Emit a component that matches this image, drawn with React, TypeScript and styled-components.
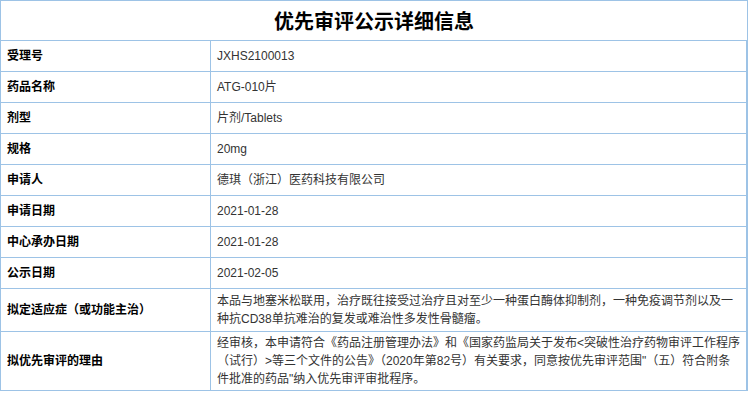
import React from 'react';
import styled, {createGlobalStyle} from 'styled-components';

const GlobalStyle = createGlobalStyle`
  html, body {
    margin: 0;
    padding: 0;
    background: #fff;
  }
  body {
    font-family: "Liberation Sans", "Noto Sans CJK SC", sans-serif;
  }
`;

const border = '#9dc3e6';

type Item = {label: string; value: string; h?: number};

const items: Item[] = [
    {label: '受理号', value: 'JXHS2100013'},
    {label: '药品名称', value: 'ATG-010片'},
    {label: '剂型', value: '片剂/Tablets'},
    {label: '规格', value: '20mg'},
    {label: '申请人', value: '德琪（浙江）医药科技有限公司'},
    {label: '申请日期', value: '2021-01-28'},
    {label: '中心承办日期', value: '2021-01-28'},
    {label: '公示日期', value: '2021-02-05'},
    {
        label: '拟定适应症（或功能主治）',
        value: '本品与地塞米松联用，治疗既往接受过治疗且对至少一种蛋白酶体抑制剂，一种免疫调节剂以及一种抗CD38单抗难治的复发或难治性多发性骨髓瘤。',
        h: 42,
    },
    {
        label: '拟优先审评的理由',
        value: '经审核，本申请符合《药品注册管理办法》和《国家药监局关于发布<突破性治疗药物审评工作程序（试行）>等三个文件的公告》（2020年第82号）有关要求，同意按优先审评范围"（五）符合附条件批准的药品"纳入优先审评审批程序。',
        h: 58,
    },
];

export default function App() {
    return (
        <>
            <GlobalStyle/>
            <Table>
                <Title>优先审评公示详细信息</Title>
                {items.map(item => (
                    <Row key={item.label} $h={item.h ?? 30}>
                        <Label>{item.label}</Label>
                        <Value>{item.value}</Value>
                    </Row>
                ))}
            </Table>
        </>
    );
}

const Table = styled.div`
  width: 748px;
  box-sizing: border-box;
  border-left: 1px solid ${border};
  border-right: 1px solid ${border};
`;

const Title = styled.div`
  height: 41px;
  box-sizing: border-box;
  border-top: 1px solid ${border};
  border-bottom: 1px solid ${border};
  display: flex;
  align-items: center;
  justify-content: center;
  font-size: 20px;
  font-weight: 700;
  color: #000;
`;

const Row = styled.div<{ $h: number }>`
  display: grid;
  grid-template-columns: 210px 1fr;
  min-height: ${(p) => p.$h}px;
  border-bottom: 1px solid ${border};
`;

const Cell = styled.div`
  display: flex;
  align-items: center;
  padding: 0 6px;
  font-size: 12px;
  line-height: 18px;
`;

const Label = styled(Cell)`
  font-weight: 700;
  color: #000;
  border-right: 1px solid ${border};
`;

const Value = styled(Cell)`
  color: #333;
  border-right: 1px solid ${border};
`;
